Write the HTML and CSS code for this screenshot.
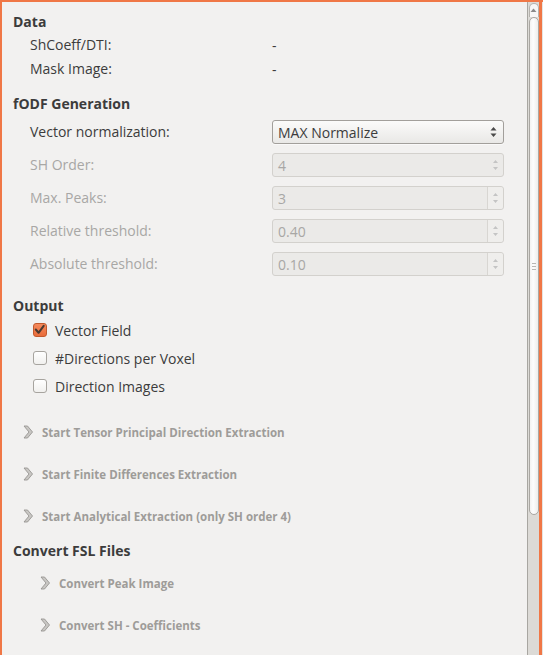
FILE: index.html
```html
<!DOCTYPE html>
<html>
<head>
<meta charset="utf-8">
<link rel="stylesheet" href="styles.css">
</head>
<body>
<div class="window">
  <div class="content">
    <section class="group group-data">
      <h2 class="title">Data</h2>
      <div class="info">
        <div class="info-row"><span class="label">ShCoeff/DTI:</span><span class="value">-</span></div>
        <div class="info-row"><span class="label">Mask Image:</span><span class="value">-</span></div>
      </div>
    </section>

    <section class="group group-fodf">
      <h2 class="title">fODF Generation</h2>
      <div class="form">
        <span class="label">Vector normalization:</span>
        <div class="combo"><span>MAX Normalize</span>
          <svg class="arrows" width="7" height="12" viewBox="0 0 7 12"><path d="M3.5 1 L6.5 4.5 H0.5 Z M3.5 11 L6.5 7.5 H0.5 Z" fill="#4a4a4a"/></svg>
        </div>

        <span class="label disabled">SH Order:</span>
        <div class="spin"><span>4</span>
          <div class="spin-buttons">
            <svg width="7" height="14" viewBox="0 0 7 14"><path d="M3.5 2 L6 5 H1 Z M3.5 12 L6 9 H1 Z" fill="#c4c4c4"/></svg>
          </div>
        </div>

        <span class="label disabled">Max. Peaks:</span>
        <div class="spin"><span>3</span>
          <div class="spin-buttons split">
            <svg width="7" height="14" viewBox="0 0 7 14"><path d="M3.5 2 L6 5 H1 Z M3.5 12 L6 9 H1 Z" fill="#c4c4c4"/></svg>
          </div>
        </div>

        <span class="label disabled">Relative threshold:</span>
        <div class="spin"><span>0.40</span>
          <div class="spin-buttons split">
            <svg width="7" height="14" viewBox="0 0 7 14"><path d="M3.5 2 L6 5 H1 Z M3.5 12 L6 9 H1 Z" fill="#c4c4c4"/></svg>
          </div>
        </div>

        <span class="label disabled">Absolute threshold:</span>
        <div class="spin"><span>0.10</span>
          <div class="spin-buttons split">
            <svg width="7" height="14" viewBox="0 0 7 14"><path d="M3.5 2 L6 5 H1 Z M3.5 12 L6 9 H1 Z" fill="#c4c4c4"/></svg>
          </div>
        </div>
      </div>
    </section>

    <section class="group group-output">
      <h2 class="title">Output</h2>
      <div class="checks">
        <label class="check"><span class="box checked">
          <svg width="14" height="14" viewBox="0 0 14 14"><path d="M3 6.5 L6 10 L11.5 2.5" fill="none" stroke="#4b3a31" stroke-width="2.2" stroke-linecap="round" stroke-linejoin="round"/></svg>
        </span>Vector Field</label>
        <label class="check"><span class="box"></span>#Directions per Voxel</label>
        <label class="check"><span class="box"></span>Direction Images</label>
      </div>
    </section>

    <div class="expanders">
      <div class="expander">
        <svg class="chev" width="10" height="14" viewBox="0 0 10 14"><path d="M1 1 H4.5 L9.5 7 L4.5 13 H1 L6 7 Z" fill="#c9c7c4" stroke="#979592" stroke-width="0.9" stroke-linejoin="round"/></svg>
        <span>Start Tensor Principal Direction Extraction</span>
      </div>
      <div class="expander">
        <svg class="chev" width="10" height="14" viewBox="0 0 10 14"><path d="M1 1 H4.5 L9.5 7 L4.5 13 H1 L6 7 Z" fill="#c9c7c4" stroke="#979592" stroke-width="0.9" stroke-linejoin="round"/></svg>
        <span>Start Finite Differences Extraction</span>
      </div>
      <div class="expander">
        <svg class="chev" width="10" height="14" viewBox="0 0 10 14"><path d="M1 1 H4.5 L9.5 7 L4.5 13 H1 L6 7 Z" fill="#c9c7c4" stroke="#979592" stroke-width="0.9" stroke-linejoin="round"/></svg>
        <span>Start Analytical Extraction (only SH order 4)</span>
      </div>
    </div>

    <section class="group group-fsl">
      <h2 class="title">Convert FSL Files</h2>
      <div class="expanders nested">
        <div class="expander">
          <svg class="chev" width="10" height="14" viewBox="0 0 10 14"><path d="M1 1 H4.5 L9.5 7 L4.5 13 H1 L6 7 Z" fill="#c9c7c4" stroke="#979592" stroke-width="0.9" stroke-linejoin="round"/></svg>
          <span>Convert Peak Image</span>
        </div>
        <div class="expander">
          <svg class="chev" width="10" height="14" viewBox="0 0 10 14"><path d="M1 1 H4.5 L9.5 7 L4.5 13 H1 L6 7 Z" fill="#c9c7c4" stroke="#979592" stroke-width="0.9" stroke-linejoin="round"/></svg>
          <span>Convert SH - Coefficients</span>
        </div>
      </div>
    </section>
  </div>

  <div class="scrollbar">
    <div class="stepper">
      <svg width="7" height="5" viewBox="0 0 7 5"><path d="M3.5 0.5 L6.5 4 H0.5 Z" fill="#8a8a8a"/></svg>
    </div>
    <div class="thumb"><span class="grip"></span></div>
  </div>
  <div class="edge"></div>
</div>
</body>
</html>
```

FILE: styles.css
```css
html, body {
  margin: 0;
  padding: 0;
  background: #f2f1f0;
}

body {
  font-family: "Open Sans", "Liberation Sans", sans-serif;
  font-size: 14px;
  color: #3c3c3c;
}

.window {
  display: flex;
  height: 653px;
  width: 541px;
  border-top: 2px solid #f07746;
  border-left: 2px solid #f07746;
  overflow: hidden;
  background: #f2f1f0;
}

.content {
  flex: 1;
  padding: 10px 0 0 11px;
}

.title {
  margin: 0;
  font-size: 14px;
  font-weight: 700;
  line-height: 20px;
  color: #3c3c3c;
}

.label {
  line-height: 24px;
}

.disabled {
  color: #a8a7a5;
}

.info {
  padding: 1px 0 0 17px;
}

.info-row {
  display: grid;
  grid-template-columns: 242px auto;
  height: 24px;
  align-items: center;
}

.group-fodf {
  margin-top: 13px;
}

.form {
  display: grid;
  grid-template-columns: 242px 232px;
  grid-auto-rows: 24px;
  row-gap: 9px;
  padding: 6px 0 0 17px;
  align-items: center;
}

.combo, .spin {
  box-sizing: border-box;
  height: 24px;
  border-radius: 3px;
  display: flex;
  align-items: center;
  padding-left: 5px;
}

.combo {
  border: 1px solid #a29f9b;
  background: linear-gradient(#fbfbfa, #e9e8e6);
  box-shadow: 0 1px 0 rgba(255,255,255,0.6);
}

.combo span {
  flex: 1;
}

.combo .arrows {
  margin-right: 6px;
}

.spin {
  border: 1px solid #d3d1cd;
  background: #ebeae8;
  color: #a8a7a5;
}

.spin span {
  flex: 1;
}

.spin-buttons {
  width: 16px;
  height: 22px;
  display: flex;
  align-items: center;
  justify-content: center;
  box-sizing: border-box;
}

.spin-buttons.split {
  border-left: 1px solid #d8d6d2;
  background: #efeeec;
  border-radius: 0 3px 3px 0;
}

.group-output {
  margin-top: 20px;
}

.checks {
  padding-left: 20px;
}

.check {
  display: flex;
  align-items: center;
  height: 28px;
}

.box {
  box-sizing: border-box;
  width: 14px;
  height: 14px;
  border: 1px solid #a7a49f;
  border-radius: 3px;
  background: linear-gradient(#ffffff, #f1f0ee);
  margin-right: 8px;
  display: flex;
}

.box.checked {
  border-color: #c2592d;
  background: linear-gradient(#f58a5c, #e96c3a);
}

.box.checked svg {
  margin: -1px 0 0 -1px;
}

.expanders {
  margin-top: 11px;
}

.expander {
  display: flex;
  align-items: center;
  height: 42px;
  padding-left: 10px;
  font-size: 11.5px;
  font-weight: 700;
  color: #9e9c99;
}

.chev {
  margin-right: 9px;
}

.group-fsl {
  margin-top: 4px;
}

.expanders.nested {
  margin-top: 1px;
}

.nested .expander {
  padding-left: 27px;
}

.scrollbar {
  width: 12px;
  box-sizing: border-box;
  border-left: 1px solid #a8a6a1;
  background: #dcdad6;
  padding-top: 1px;
  display: flex;
  flex-direction: column;
  align-items: center;
}

.stepper {
  width: 10px;
  height: 14px;
  box-sizing: border-box;
  border: 1px solid #b5b2ad;
  border-bottom: none;
  border-radius: 5px 5px 0 0;
  background: #f7f7f6;
  display: flex;
  justify-content: center;
  padding-top: 4px;
}

.thumb {
  width: 10px;
  height: 498px;
  box-sizing: border-box;
  border: 1px solid #aaa7a2;
  border-radius: 5px;
  background: linear-gradient(90deg, #f3f2f1, #fdfdfd 40%, #eeedeb);
  display: flex;
  align-items: center;
  justify-content: center;
}

.grip {
  width: 4px;
  height: 5px;
  border-top: 1px solid #b8b6b2;
  border-bottom: 1px solid #b8b6b2;
  position: relative;
}

.grip::after {
  content: "";
  position: absolute;
  left: 0;
  right: 0;
  top: 2px;
  height: 1px;
  background: #b8b6b2;
}

.edge {
  width: 3px;
  background: #f07746;
  border-right: 1px solid #e6e4e1;
}
```
